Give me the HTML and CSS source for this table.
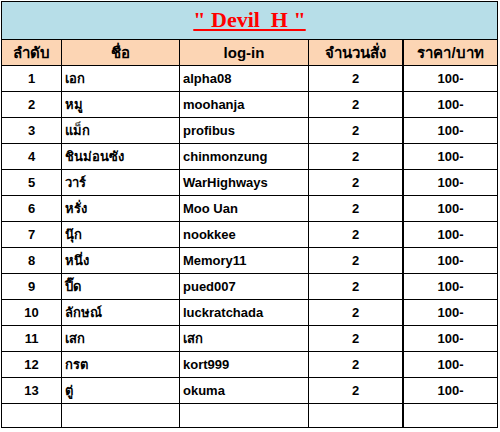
FILE: index.html
```html
<!DOCTYPE html>
<html>
<head>
<meta charset="utf-8">
<link rel="stylesheet" href="styles.css">
</head>
<body>
<div class="sheet">
  <div class="title"><span>" Devil&nbsp; H "</span></div>
  <div class="hd">ลำดับ</div><div class="hd">ชื่อ</div><div class="hd">log-in</div><div class="hd">จำนวนสั่ง</div><div class="hd last">ราคา/บาท</div>
  <div class="c">1</div><div class="l">เอก</div><div class="l">alpha08</div><div class="c">2</div><div class="c last">100-</div>
  <div class="c">2</div><div class="l">หมู</div><div class="l">moohanja</div><div class="c">2</div><div class="c last">100-</div>
  <div class="c">3</div><div class="l">แม็ก</div><div class="l">profibus</div><div class="c">2</div><div class="c last">100-</div>
  <div class="c">4</div><div class="l">ชินม่อนซัง</div><div class="l">chinmonzung</div><div class="c">2</div><div class="c last">100-</div>
  <div class="c">5</div><div class="l">วาร์</div><div class="l">WarHighways</div><div class="c">2</div><div class="c last">100-</div>
  <div class="c">6</div><div class="l">หรั่ง</div><div class="l">Moo Uan</div><div class="c">2</div><div class="c last">100-</div>
  <div class="c">7</div><div class="l">นุ๊ก</div><div class="l">nookkee</div><div class="c">2</div><div class="c last">100-</div>
  <div class="c">8</div><div class="l">หนึ่ง</div><div class="l">Memory11</div><div class="c">2</div><div class="c last">100-</div>
  <div class="c">9</div><div class="l">ปี๊ด</div><div class="l">pued007</div><div class="c">2</div><div class="c last">100-</div>
  <div class="c">10</div><div class="l">ลักษณ์</div><div class="l">luckratchada</div><div class="c">2</div><div class="c last">100-</div>
  <div class="c">11</div><div class="l">เสก</div><div class="l">เสก</div><div class="c">2</div><div class="c last">100-</div>
  <div class="c">12</div><div class="l">กรต</div><div class="l">kort999</div><div class="c">2</div><div class="c last">100-</div>
  <div class="c">13</div><div class="l">ตู่</div><div class="l">okuma</div><div class="c">2</div><div class="c last">100-</div>
  <div class="c"></div><div class="l"></div><div class="l"></div><div class="c"></div><div class="c last"></div>
</div>
</body>
</html>
```
FILE: styles.css
```css
html, body {
  margin: 0;
  padding: 0;
  background: #ffffff;
}
body {
  padding: 1px 0 0 1px;
  font-family: "Liberation Sans", "Noto Sans", sans-serif;
  font-weight: bold;
  font-size: 13px;
  color: #000;
}
.sheet {
  display: grid;
  width: 495px;
  grid-template-columns: 59px 117px 128px 93px 94px;
  grid-template-rows: 37px 25px repeat(13, 25px) 23px;
  gap: 1px;
  padding: 1px;
  background: #000;
}
.sheet > div {
  background: #fff;
  display: flex;
  align-items: center;
  overflow: hidden;
  white-space: nowrap;
}
.title {
  grid-column: 1 / -1;
  background: #b7dee8 !important;
  justify-content: center;
  font-family: "Liberation Serif", serif;
  font-weight: 900;
  font-size: 22px;
  color: #ff0000;
  text-decoration: underline;
  padding-bottom: 2px;
}
.hd {
  background: #fcd5b4 !important;
  justify-content: center;
  font-size: 15px;
}
.c {
  justify-content: center;
}
.l {
  padding-left: 3px;
}
.last {
  border-left: 1px solid #000;
}
```
